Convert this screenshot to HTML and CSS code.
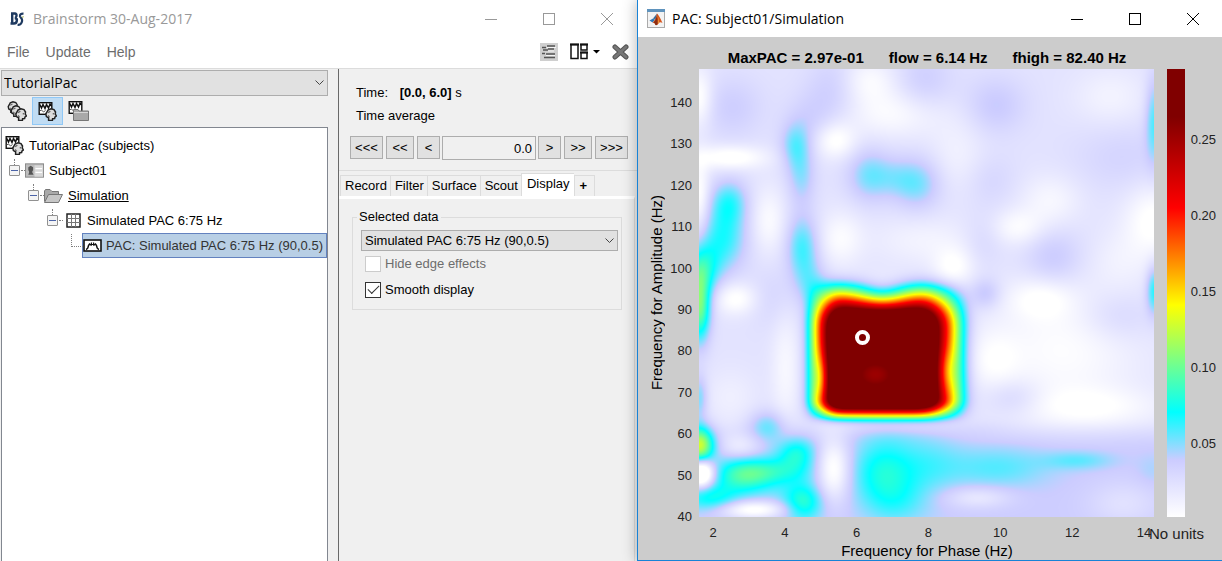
FILE: index.html
```html
<!DOCTYPE html>
<html lang="en">
<head>
  <meta charset="UTF-8" />
  <meta name="viewport" content="width=device-width, initial-scale=1.0" />
  <title>Brainstorm 30-Aug-2017</title>
  <link rel="stylesheet" href="styles.css">
</head>
<body>
  <svg class="defs" width="0" height="0" aria-hidden="true">
    <symbol id="head" viewBox="0 0 12 13">
      <path d="M2 4 L3 2 L6 .8 L9 1.6 L10.5 4 L10.3 6 L11.4 8 L10 9 L9.6 10.6 L7.6 10.8 L7.4 12.4 L3.6 12.4 L3.6 9.8 L1.4 8.6 L.8 6 Z" fill="#ddd" stroke="#222" stroke-width="1.5"/>
      <path d="M3 7.5 L4.5 9 M3 4.6 L5.4 3.2 M8.4 5 V6.4" stroke="#666" stroke-width="1.3" fill="none"/>
    </symbol>
    <symbol id="waves" viewBox="0 0 14 13">
      <rect x=".7" y=".7" width="12.6" height="11.6" fill="#fff" stroke="#111" stroke-width="1.4"/>
      <path d="M1 2 L3 6 L4.5 2.5 L6.5 6.5 L8 2.5 L10 6 L11.5 2 L13 4" fill="none" stroke="#111" stroke-width="1.5"/>
      <path d="M1 9 L3 8 L5 10 L7 8.5" fill="none" stroke="#555"/>
    </symbol>
    <symbol id="protocol" viewBox="0 0 19 19">
      <use href="#waves" x="0" y="0" width="15" height="13"/>
      <use href="#head" x="7" y="6" width="12" height="13"/>
    </symbol>
  </svg>

  <div class="window main-window">
    <div class="titlebar">
      <svg class="app-icon" width="16" height="14" viewBox="0 0 16 14">
        <path d="M2 1.5 H6 Q8 2 7.4 4.2 Q7 5.8 6 6 Q8.4 6.6 7.8 9 Q7.4 11.5 5 11.5 H1.5 M3.2 1.5 V11" fill="none" stroke="#1f3a60" stroke-width="2.4"/>
        <path d="M14.5 1.6 Q10.8 1.4 11 4.2 Q11.4 5.6 12.6 6.6 Q13.6 8.4 12.6 10.6 Q11.5 13 8.6 12.8" fill="none" stroke="#1f3a60" stroke-width="2.2"/>
        <path d="M14.2 4 L13.6 6" stroke="#a6b556"/>
      </svg>
      <span class="title">Brainstorm 30-Aug-2017</span>
      <div class="caption">
        <button aria-label="Minimize"><svg width="12" height="12"><path d="M0 6.5 H12" stroke="currentColor"/></svg></button>
        <button aria-label="Maximize"><svg width="12" height="12"><rect x=".5" y=".5" width="11" height="11" fill="none" stroke="currentColor"/></svg></button>
        <button aria-label="Close"><svg width="12" height="12"><path d="M0 0 L12 12 M12 0 L0 12" stroke="currentColor"/></svg></button>
      </div>
    </div>

    <div class="menubar">
      <a href="#">File</a>
      <a href="#">Update</a>
      <a href="#">Help</a>
      <div class="menu-tools">
        <button aria-label="Filters">
          <svg width="18" height="18" viewBox="0 0 18 18">
            <rect width="18" height="18" fill="#cfcfcf"/>
            <path d="M2 4.5 H6 M7 3 H15 M3 7 H8 M8 6 H14 M2 10.5 H5 M6 11 H15 M4 14.5 H15" stroke="#555" stroke-width="1.4"/>
            <path d="M7 4.5 H16 M8 8 H14 M6 12.5 H15" stroke="#f4f4f4"/>
          </svg>
        </button>
        <button aria-label="Layout">
          <svg width="30" height="17" viewBox="0 0 30 17">
            <path d="M1 1.5 H8 V15.5 H1 Z M11 1.5 H17 V7 H11 Z M11 9.5 H17 V15.5 H11 Z" fill="#fff" stroke="#111" stroke-width="1.5"/>
            <path d="M0 1.5 H9 M10 1.5 H18 M10 9.5 H18" stroke="#111" stroke-width="2.2"/>
            <path d="M23 7 H30 L26.5 10.5 Z" fill="#000"/>
          </svg>
        </button>
        <button aria-label="Close all">
          <svg width="17" height="16" viewBox="0 0 17 16"><path d="M3 3 L14 13 M14 3 L3 13" stroke="#555" stroke-width="5" stroke-linecap="round"/><path d="M3 3 L14 13 M14 3 L3 13" stroke="#777" stroke-width="3" stroke-linecap="round"/></svg>
        </button>
      </div>
    </div>

    <div class="workspace">
      <div class="explorer">
        <div class="combo combo-protocol">
          <select aria-label="Protocol"><option>TutorialPac</option></select>
          <svg width="9" height="6" viewBox="0 0 9 6"><path d="M.5 .5 L4.5 4.5 L8.5 .5" fill="none" stroke="#444"/></svg>
        </div>
        <div class="toolbar">
          <button aria-label="Anatomy">
            <svg width="20" height="20" viewBox="0 0 20 20">
              <use href="#head" x="0" y="0" width="12" height="12"/>
              <use href="#head" x="3" y="4" width="12" height="12"/>
              <use href="#head" x="8" y="7" width="12" height="13"/>
            </svg>
          </button>
          <button class="selected" aria-label="Functional data, by subject"><svg width="19" height="19"><use href="#protocol"/></svg></button>
          <button aria-label="Functional data, by condition">
            <svg width="21" height="20" viewBox="0 0 21 20">
              <use href="#waves" x="0" y="0" width="15" height="13"/>
              <path d="M5.5 8.5 H10 L11 10 H20.5 V19.5 H5.5 Z" fill="#a9a9a9" stroke="#777"/>
              <path d="M6 11.5 H20" stroke="#d6d6d6"/>
            </svg>
          </button>
        </div>
        <ul class="tree">
          <li>
            <div class="node root"><svg width="19" height="19"><use href="#protocol"/></svg><span>TutorialPac (subjects)</span></div>
            <ul>
              <li>
                <div class="node"><button class="toggle" aria-label="Collapse"></button>
                  <svg width="19" height="15" viewBox="0 0 20 15"><rect x=".5" y=".5" width="19" height="14" fill="#bdbdbd" stroke="#888"/><rect x="10" y="2" width="9" height="12" fill="#d9d9d9"/><path d="M3.5 12 L4.5 9 L3.5 7 V4 L6 2.5 L8.5 4 V7 L7.5 9 L9 12 Z" fill="#555"/><path d="M11 5.5 H18 M11 9.5 H18" stroke="#fff" stroke-width="1.5"/></svg>
                  <span>Subject01</span></div>
                <ul>
                  <li>
                    <div class="node"><button class="toggle" aria-label="Collapse"></button>
                      <svg width="19" height="14" viewBox="0 0 19 14"><path d="M.5 12.5 V2 L1.5 .5 H6 L8 2.5 H14.5 V5" fill="#aaa" stroke="#777"/><path d="M.5 13.5 L4.5 5.5 H18.5 L14.5 13.5 Z" fill="#c6c6c6" stroke="#777"/></svg>
                      <span><u>Simulation</u></span></div>
                    <ul>
                      <li>
                        <div class="node"><button class="toggle" aria-label="Collapse"></button>
                          <svg width="19" height="15" viewBox="-3 0 19 15"><rect x="1" y="1" width="13" height="13" fill="#fff" stroke="#222" stroke-width="1.5"/><path d="M5.5 1 V14 M9.5 1 V14 M1 5.5 H14 M1 9.5 H14" stroke="#777"/></svg>
                          <span>Simulated PAC 6:75 Hz</span></div>
                        <ul>
                          <li>
                            <div class="node leaf">
                              <svg width="19" height="13" viewBox="0 0 19 13"><rect x="1" y="1" width="17" height="11" fill="#fff" stroke="#111" stroke-width="1.6"/><path d="M3 10.5 Q5 10 5.5 6.5 L7 4.5 M12 4.5 L13.5 6.5 Q14 10 16 10.5" fill="none" stroke="#111" stroke-width="1.5"/><path d="M6 5.5 H13 M8 7 L8.5 3.5 M10.5 3.5 L11 7" stroke="#111" stroke-width="1.2"/></svg>
                              <span>PAC: Simulated PAC 6:75 Hz (90,0.5)</span></div>
                          </li>
                        </ul>
                      </li>
                    </ul>
                  </li>
                </ul>
              </li>
            </ul>
          </li>
        </ul>
      </div>

      <div class="side">
        <div class="time-panel">
          <p><span class="time-label">Time:</span> <b>[0.0, 6.0]</b> s</p>
          <p>Time average</p>
          <div class="stepper">
            <button class="w3">&lt;&lt;&lt;</button>
            <button class="w2">&lt;&lt;</button>
            <button class="w1">&lt;</button>
            <input type="text" value="0.0" aria-label="Current time">
            <button class="w1">&gt;</button>
            <button class="w2">&gt;&gt;</button>
            <button class="w3">&gt;&gt;&gt;</button>
          </div>
        </div>
        <div class="tabs">
          <button>Record</button>
          <button>Filter</button>
          <button>Surface</button>
          <button>Scout</button>
          <button class="active">Display</button>
          <button class="add">+</button>
        </div>
        <div class="tab-page">
          <fieldset>
            <legend>Selected data</legend>
            <div class="combo combo-data">
              <select aria-label="Selected data"><option>Simulated PAC 6:75 Hz (90,0.5)</option></select>
              <svg width="9" height="6" viewBox="0 0 9 6"><path d="M.5 .5 L4.5 4.5 L8.5 .5" fill="none" stroke="#444"/></svg>
            </div>
            <label class="check off"><input type="checkbox" disabled> Hide edge effects</label>
            <label class="check"><input type="checkbox" checked> Smooth display</label>
          </fieldset>
        </div>
      </div>
    </div>
  </div>

  <div class="window figure-window">
    <div class="titlebar">
      <svg class="app-icon" width="18" height="19" viewBox="0 0 18 19">
        <rect x=".5" y=".5" width="17" height="18" fill="#f3f3f3" stroke="#aaa"/>
        <rect width="18" height="3" fill="#5f93bd"/>
        <path d="M2.5 11.5 L6 9.5 L8 11 L5.5 13.5 Z" fill="#2d78b8"/>
        <path d="M6 9.5 L10 4.5 L8.6 11 Z" fill="#3c6f9d"/>
        <path d="M10 4.5 Q12 6 15.5 14 Q13 12.5 11.5 14.5 Q10 16.5 8.5 16 Q8 13.5 5.5 13.5 Q9 11 10 4.5" fill="#d8551c"/>
        <path d="M10 4.5 Q11 9 10.5 15.5 Q9.5 16.5 8.5 16 Q8 13.5 6.5 13.5 Q9.5 11 10 4.5" fill="#8c2d12"/>
        <path d="M10.4 6 Q11.8 9 12 13.5 L11 14.8 Q11 9 10.4 6" fill="#f0a23a"/>
      </svg>
      <span class="title">PAC: Subject01/Simulation</span>
      <div class="caption">
        <button aria-label="Minimize"><svg width="12" height="12"><path d="M0 6.5 H12" stroke="currentColor"/></svg></button>
        <button aria-label="Maximize"><svg width="12" height="12"><rect x=".5" y=".5" width="11" height="11" fill="none" stroke="currentColor"/></svg></button>
        <button aria-label="Close"><svg width="12" height="12"><path d="M0 0 L12 12 M12 0 L0 12" stroke="currentColor"/></svg></button>
      </div>
    </div>

    <div class="figure">
      <div class="plot-title"><span>MaxPAC = 2.97e-01</span><span>flow = 6.14 Hz</span><span>fhigh = 82.40 Hz</span></div>
      <div class="y-label"><span>Frequency for Amplitude (Hz)</span></div>
      <div class="y-ticks">
        <span>140</span><span>130</span><span>120</span><span>110</span><span>100</span><span>90</span><span>80</span><span>70</span><span>60</span><span>50</span><span>40</span>
      </div>
      <div class="plot">
        <canvas id="pac" width="455" height="448"></canvas>
        <div class="marker"></div>
      </div>
      <div class="colorbar"></div>
      <div class="color-ticks"><span>0.25</span><span>0.20</span><span>0.15</span><span>0.10</span><span>0.05</span></div>
      <div class="x-ticks"><span>2</span><span>4</span><span>6</span><span>8</span><span>10</span><span>12</span><span>14</span></div>
      <div class="units">No units</div>
      <div class="x-label">Frequency for Phase (Hz)</div>
    </div>
  </div>

  <script src="pac.js"></script>
</body>
</html>
```
FILE: styles.css
```css
* {
  box-sizing: border-box;
}
body {
  margin: 0;
  min-height: 100vh;
  display: grid;
  grid-template-columns: 637fr 585fr;
  font-family: "Liberation Sans", Arial, sans-serif;
  font-size: 13px;
  line-height: 16px;
  color: #000;
  background: #fff;
  overflow: hidden;
}
button, input, select {
  font: inherit;
  color: inherit;
}
button {
  padding: 0;
  border: 0;
  background: none;
}
ul, p {
  margin: 0;
  padding: 0;
  list-style: none;
}
svg {
  display: block;
  flex: none;
}
.defs {
  position: absolute;
}

/* windows */
.window {
  display: flex;
  flex-direction: column;
  min-width: 0;
}
.figure-window {
  border-left: 1px solid #1883d7;
  border-bottom: 1px solid #1883d7;
  box-shadow: 0 0 14px rgba(0,0,0,0.3);
  z-index: 1;
}
.titlebar {
  display: flex;
  align-items: center;
  height: 37px;
  padding-left: 9px;
  background: #fff;
  font-family: "Open Sans", "Noto Sans", sans-serif;
  font-size: 14px;
}
.main-window .titlebar {
  color: #999;
}
.title {
  margin-left: 8px;
  white-space: nowrap;
}
.figure-window .title {
  margin-left: 7px;
}
.caption {
  display: flex;
  margin-left: auto;
}
.caption button {
  display: flex;
  justify-content: center;
  width: 58px;
}
.main-window .caption {
  margin-right: 1px;
}

/* menu */
.menubar {
  display: flex;
  align-items: center;
  gap: 16px;
  height: 31px;
  padding: 0 8px 2px 7px;
  background: #fff;
  font-size: 14px;
}
.menubar a {
  color: #6d6d6d;
  text-decoration: none;
}
.menu-tools {
  display: flex;
  align-items: center;
  gap: 12px;
  margin-left: auto;
}

.workspace {
  flex: 1;
  display: grid;
  grid-template-columns: 338fr 299fr;
  background: #f0f0f0;
  border-top: 1px solid #dcdcdc;
}
.explorer {
  min-width: 0;
  display: flex;
  flex-direction: column;
  padding: 1px 10px 0 1px;
}
.combo {
  position: relative;
}
.combo select {
  display: block;
  width: 100%;
  padding: 0 3px;
  appearance: none;
  border: 1px solid #adadad;
  border-radius: 0;
  background: #e1e1e1;
}
.combo svg {
  position: absolute;
  right: 4px;
  top: 50%;
  margin-top: -3px;
  pointer-events: none;
}
.combo-protocol select {
  height: 26px;
  padding: 0 2px;
  font-family: "Open Sans", "Noto Sans", sans-serif;
  font-size: 14px;
}
.toolbar {
  display: flex;
  height: 31px;
  padding-top: 1px;
}
.toolbar button {
  display: flex;
  align-items: center;
  justify-content: center;
  width: 31px;
  height: 28px;
  border: 1px solid transparent;
}
.toolbar .selected {
  background: #c0dcf3;
  border-color: #90c8f6;
}

/* database tree */
.tree {
  flex: 1;
  padding: 5px 0 0 3px;
  background: #fff;
  border: 1px solid #828790;
  border-bottom: 0;
}
.tree ul ul {
  padding-left: 19px;
}
.node {
  position: relative;
  display: flex;
  align-items: center;
  height: 25px;
  padding-left: 4px;
  white-space: nowrap;
}
.node span {
  margin-left: 5px;
}
.root {
  padding-left: 0;
}
.toggle {
  width: 11px;
  height: 11px;
  margin-right: 5px;
  border: 1px solid #919191;
  border-radius: 1px;
  background: linear-gradient(#4b63a7, #4b63a7) center / 7px 1px no-repeat, #f4f4f4;
}
.toggle::before {
  content: "";
  position: absolute;
  left: 9px;
  top: 1px;
  height: 6px;
  border-left: 1px dotted #808080;
}
.toggle::after {
  content: "";
  position: absolute;
  left: 16px;
  top: 12px;
  width: 4px;
  border-top: 1px dotted #808080;
}
.leaf {
  margin-left: 20px;
  padding-left: 0;
  border: 1px solid #6382bf;
  background: #b8cfe5;
  color: #333;
}
.leaf span {
  margin-left: 4px;
}
.leaf::before {
  content: "";
  position: absolute;
  left: -12px;
  top: 0;
  width: 11px;
  height: 12px;
  border-left: 1px dotted #808080;
  border-bottom: 1px dotted #808080;
}

/* time and tabs */
.side {
  min-width: 0;
  border-left: 1px solid #696969;
}
.time-panel {
  height: 102px;
  padding: 16px 9px 0 11px;
  border-bottom: 1px solid #dcdcdc;
}
.time-panel p {
  padding-left: 6px;
  margin-bottom: 7px;
}
.time-label {
  margin-right: 8px;
}
.stepper {
  display: flex;
  gap: 3px;
  margin-top: 12px;
}
.stepper button, .stepper input {
  height: 23px;
  border: 1px solid #adadad;
  background: #e1e1e1;
}
.stepper input {
  flex: 1;
  min-width: 0;
  height: 24px;
  margin: 0 -1px;
  padding: 0 3px;
  text-align: right;
  background: #f0f0f0;
}
.stepper .w1 {
  width: 23px;
}
.stepper .w2 {
  width: 28px;
}
.stepper .w3 {
  width: 33px;
}
.tabs {
  display: flex;
  align-items: flex-end;
  height: 25px;
  padding-left: 1px;
}
.tabs button {
  height: 21px;
  padding: 0 3px 0 4px;
  border: 1px solid #dcdcdc;
  border-width: 1px 0 0 1px;
}
.tabs .active {
  height: 23px;
  padding: 0 4px 2px 5px;
  background: #fff;
}
.tabs .add {
  padding: 0 7px 0 5px;
  border-right-width: 1px;
  font-weight: bold;
}
.tab-page {
  height: calc(100% - 127px);
  margin-right: 2px;
  padding: 10px 12px 0 13px;
  border-top: 3px solid #fff;
  border-right: 1px solid #dcdcdc;
}
fieldset {
  min-width: 0;
  margin: 0;
  padding: 5px 3px 6px 8px;
  border: 1px solid #dcdcdc;
}
legend {
  padding: 0 2px;
  margin-left: -4px;
}
.combo-data select {
  height: 21px;
}
.check {
  display: flex;
  align-items: center;
  gap: 4px;
  height: 26px;
  padding-left: 4px;
}
.check input {
  appearance: none;
  display: grid;
  place-items: center;
  width: 16px;
  height: 16px;
  margin: 0;
  border: 1px solid #333;
  background: #fff;
}
.check input:checked::before {
  content: "";
  width: 10px;
  height: 5px;
  border: solid #333;
  border-width: 0 0 1px 1px;
  transform: translateY(-2px) rotate(-45deg);
}
.off {
  color: #6d6d6d;
}
.check input:disabled {
  border-color: #ccc;
}

/* figure */
.figure {
  flex: 1;
  display: grid;
  grid-template-columns: 30px 24px 1fr 18px 37px;
  grid-template-rows: 32px 1fr 26px 17px;
  background: #ccc;
}
.plot-title {
  grid-area: 1 / 3;
  display: flex;
  justify-content: center;
  gap: 25px;
  padding: 13px 5px 0 0;
  font-size: 15px;
  font-weight: bold;
  white-space: nowrap;
}
.y-label {
  grid-area: 2 / 1;
  display: flex;
  align-items: center;
  justify-content: center;
  padding-left: 8px;
  font-size: 15px;
}
.y-label span {
  writing-mode: vertical-rl;
  transform: rotate(180deg);
  white-space: nowrap;
}
.y-ticks {
  grid-area: 2 / 2;
  display: flex;
  flex-direction: column;
  justify-content: space-between;
  align-items: flex-end;
  margin: 26px 0 -8px;
  color: #222;
}
.plot {
  grid-area: 2 / 3;
  position: relative;
  margin: 0 13px 0 7px;
  min-height: 0;
}
.plot canvas {
  display: block;
  width: 100%;
  height: 100%;
}
.marker {
  position: absolute;
  left: 36%;
  top: 60%;
  width: 15px;
  height: 15px;
  margin: -8px;
  border: 4px solid #fff;
  border-radius: 50%;
}
.colorbar {
  grid-area: 2 / 4;
  background: linear-gradient(to top, #fff, #ccf 12.7%, #0ff 23.4%, #80ff80 35.4%, #ff0 47.3%, #f00 69%, #800000 89.3%);
}
.color-ticks {
  grid-area: 2 / 5;
  display: flex;
  flex-direction: column;
  justify-content: space-between;
  align-items: flex-end;
  padding: 63px 6px 65px 0;
  color: #222;
}
.x-ticks {
  grid-area: 3 / 3;
  display: flex;
  justify-content: space-between;
  margin: 8px 13px 0 11px;
  color: #222;
}
.x-ticks span {
  width: 20px;
  text-align: center;
}
.units {
  grid-area: 3 / 3 / 4 / 6;
  justify-self: end;
  padding: 9px 18px 0 0;
  font-size: 15px;
  color: #222;
}
.x-label {
  grid-area: 4 / 3;
  padding-right: 5px;
  text-align: center;
  font-size: 15px;
}
```
FILE: pac.js
```js
// color map: [level, r, g, b]
const colors = [
  [0, 255, 255, 255],
  [0.127, 204, 204, 255],
  [0.234, 0, 255, 255],
  [0.354, 128, 255, 128],
  [0.473, 255, 255, 0],
  [0.69, 255, 0, 0],
  [0.893, 128, 0, 0]
];

// local bumps and dips: [x, y, width, height, amplitude]
const blobs = [
  [33, 38, 30, 30, 0.05], [0, 28, 13, 28, -0.08], [134, 19, 26, 34, 0.05],
  [110, 48, 24, 26, 0.04], [168, 11, 28, 22, -0.06], [195, 44, 50, 24, -0.06],
  [225, 12, 28, 32, 0.05], [96, 76, 15, 23, 0.1], [102, 108, 14, 28, 0.08],
  [103, 178, 16, 32, 0.13], [112, 214, 16, 22, 0.07], [136, 71, 20, 18, -0.08],
  [31, 88, 36, 12, -0.09], [0, 128, 10, 38, -0.08], [170, 106, 22, 26, 0.1],
  [218, 114, 24, 26, 0.1], [196, 108, 20, 20, 0.04], [30, 132, 18, 22, 0.11],
  [24, 168, 23, 34, 0.14], [2, 200, 18, 26, 0.16], [0, 238, 11, 34, 0.27],
  [69, 151, 17, 32, -0.06], [141, 169, 22, 27, -0.06], [36, 229, 21, 16, -0.08],
  [75, 228, 24, 30, 0.03], [224, 171, 50, 24, -0.04], [296, 36, 30, 28, 0.06],
  [411, 28, 36, 28, -0.04], [455, 50, 9, 42, 0.12], [425, 88, 50, 34, 0.035],
  [291, 111, 26, 26, 0.03], [351, 131, 30, 26, -0.05], [318, 158, 26, 18, -0.06],
  [284, 171, 20, 26, 0.03], [354, 188, 28, 28, 0.06], [455, 151, 30, 36, -0.08],
  [421, 191, 30, 30, -0.03], [286, 224, 15, 15, 0.07], [455, 221, 8, 24, 0.15],
  [254, 198, 20, 20, -0.07], [341, 229, 32, 20, -0.06], [258, 86, 28, 38, -0.035],
  [364, 280, 75, 60, -0.065], [391, 338, 70, 20, -0.06], [294, 291, 26, 30, -0.05],
  [418, 248, 36, 24, 0.04], [314, 328, 28, 18, 0.05], [281, 359, 32, 10, 0.01],
  [298, 398, 50, 20, 0.065], [378, 391, 34, 9, 0.06], [278, 428, 34, 11, -0.07],
  [424, 434, 36, 22, -0.05], [453, 401, 16, 16, 0.02], [0, 328, 8, 22, 0.1],
  [0, 376, 14, 19, 0.32], [2, 403, 13, 15, -0.28], [44, 406, 30, 18, 0.17],
  [10, 428, 26, 13, 0.12], [75, 402, 34, 13, 0.08], [97, 384, 19, 16, 0.12],
  [104, 433, 19, 18, 0.14], [68, 356, 19, 15, 0.1], [54, 440, 34, 9, -0.14],
  [41, 378, 22, 13, -0.08], [134, 400, 17, 32, -0.14], [183, 402, 30, 32, 0.12],
  [198, 432, 32, 24, 0.06], [228, 395, 34, 28, 0.06], [194, 368, 50, 9, 0.02],
  [86, 298, 14, 60, -0.05], [31, 328, 26, 28, -0.03], [92, 410, 30, 30, 0.03],
  [183, 226, 26, 16, -0.2], [122, 308, 8, 24, -0.15], [247, 302, 10, 22, -0.12]
];

function step(d, s) {
  const z = d / s;
  return 1 / (1 + Math.exp(-z - 0.07 * z * z * z));
}

function bump(x, y, [bx, by, w, h, a]) {
  const dx = (x - bx) / w;
  const dy = (y - by) / h;
  return a * Math.exp(-(dx * dx + dy * dy));
}

function level(x, y) {
  let v = 0.07 + 0.055 * step(y - 364, 6);
  v += 1.2 * step(x - 121, 8) * step(248 - x, 11) * step(y - 230, 10) * step(343 - y, 5);
  for (const b of blobs) v += bump(x, y, b);
  // weaker spot inside the saturated area
  return Math.min(v, 0.95) + bump(x, y, [176, 305, 18, 13, -0.1]);
}

function colorOf(v) {
  if (v <= 0) return colors[0].slice(1);
  for (let i = 1; i < colors.length; i++) {
    if (v < colors[i][0]) {
      const a = colors[i - 1];
      const b = colors[i];
      const t = (v - a[0]) / (b[0] - a[0]);
      return [1, 2, 3].map(k => a[k] + (b[k] - a[k]) * t);
    }
  }
  return colors[colors.length - 1].slice(1);
}

const canvas = document.getElementById('pac');
const ctx = canvas.getContext('2d');
const img = ctx.createImageData(canvas.width, canvas.height);
for (let y = 0; y < canvas.height; y++) {
  for (let x = 0; x < canvas.width; x++) {
    const rgb = colorOf(level(x, y));
    const p = (y * canvas.width + x) * 4;
    img.data[p] = rgb[0];
    img.data[p + 1] = rgb[1];
    img.data[p + 2] = rgb[2];
    img.data[p + 3] = 255;
  }
}
ctx.putImageData(img, 0, 0);
```
